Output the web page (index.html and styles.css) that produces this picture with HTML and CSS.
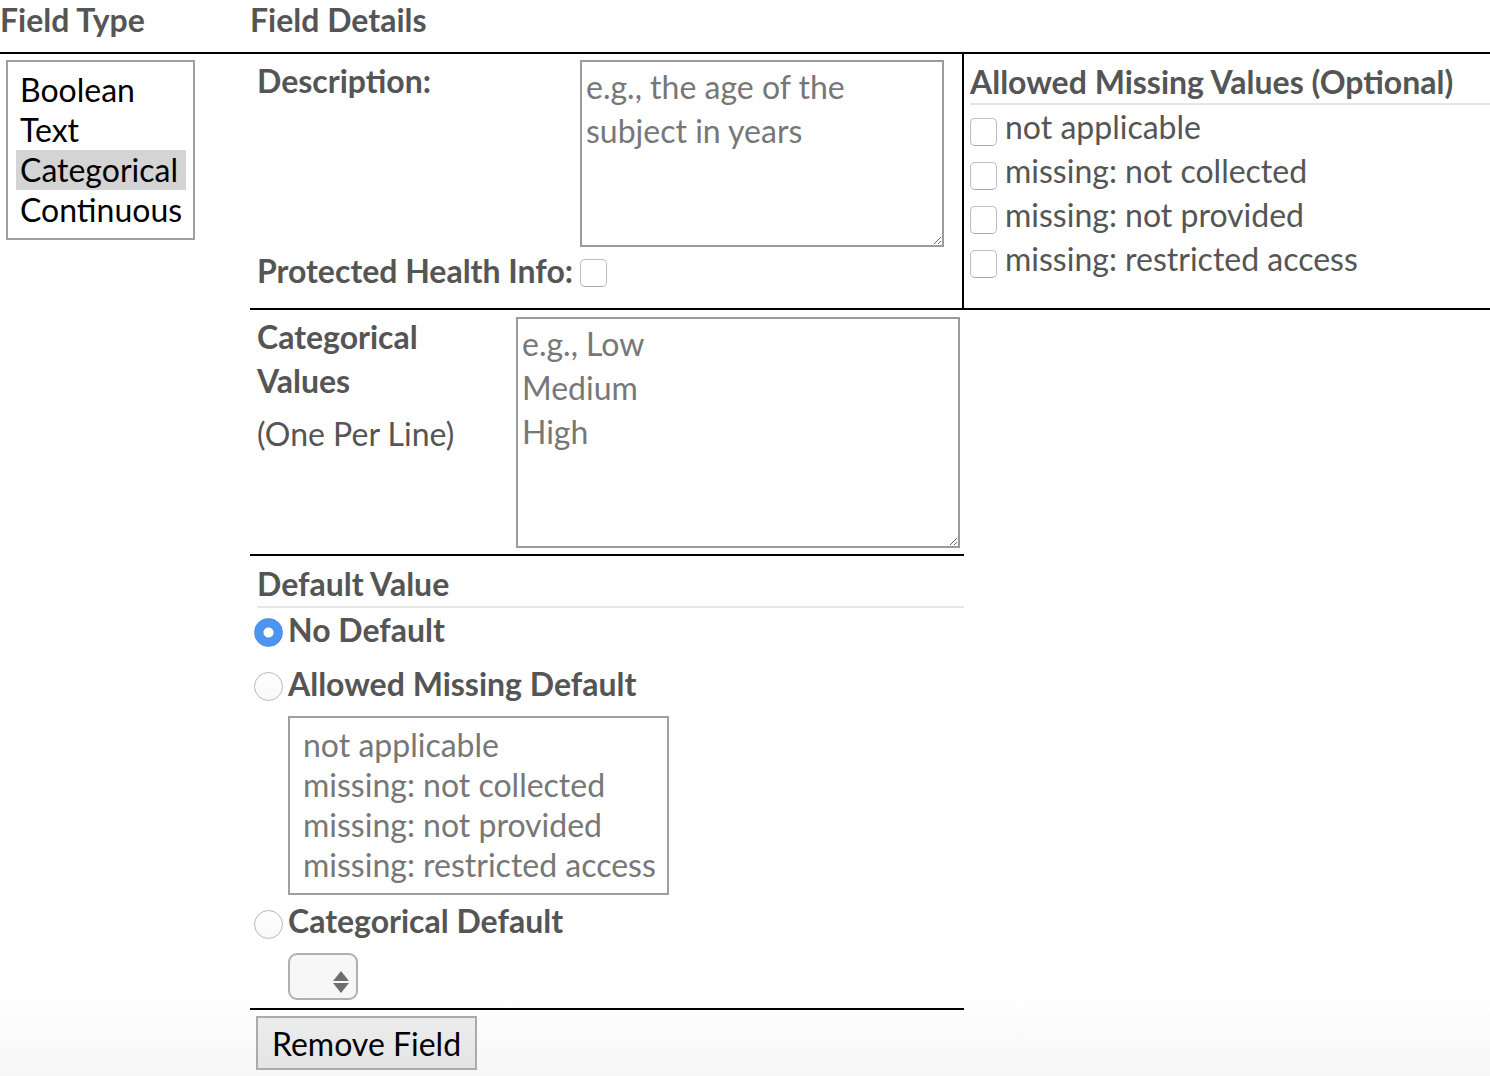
FILE: index.html
```html
<!DOCTYPE html>
<html lang="en">
<head>
<meta charset="utf-8">
<title>Field Editor</title>
<link rel="stylesheet" href="styles.css">
</head>
<body>
<div class="page">
  <div class="head-row">
    <div class="head-type">Field Type</div>
    <div class="head-details">Field Details</div>
  </div>
  <div class="main-row">
    <div class="type-col">
      <div class="listbox type-list" role="listbox">
        <div class="opt">Boolean</div>
        <div class="opt">Text</div>
        <div class="opt selected">Categorical</div>
        <div class="opt">Continuous</div>
      </div>
    </div>
    <div class="details-col">
      <div class="top-section">
        <div class="basic">
          <div class="form-row">
            <label class="lbl desc-lbl">Description:</label>
            <textarea class="ta desc" placeholder="e.g., the age of the subject in years"></textarea>
          </div>
          <div class="form-row phi-row">
            <label class="lbl">Protected Health Info:</label>
            <input type="checkbox" class="cb phi-cb">
          </div>
        </div>
        <div class="missing">
          <h4 class="sub-head">Allowed Missing Values (Optional)</h4>
          <label class="cb-row"><input type="checkbox" class="cb">not applicable</label>
          <label class="cb-row"><input type="checkbox" class="cb">missing: not collected</label>
          <label class="cb-row"><input type="checkbox" class="cb">missing: not provided</label>
          <label class="cb-row"><input type="checkbox" class="cb">missing: restricted access</label>
        </div>
      </div>
      <div class="cat-section">
        <div class="cat-label">
          <div class="cat-title">Categorical<br>Values</div>
          <div class="hint">(One Per Line)</div>
        </div>
        <textarea class="ta cats" placeholder="e.g., Low&#10;Medium&#10;High"></textarea>
      </div>
      <div class="default-section">
        <h4 class="sub-head">Default Value</h4>
        <label class="radio-row"><input type="radio" name="def" class="rd" checked>No Default</label>
        <label class="radio-row second"><input type="radio" name="def" class="rd">Allowed Missing Default</label>
        <div class="listbox missing-list" role="listbox">
          <div class="opt">not applicable</div>
          <div class="opt">missing: not collected</div>
          <div class="opt">missing: not provided</div>
          <div class="opt">missing: restricted access</div>
        </div>
        <label class="radio-row third"><input type="radio" name="def" class="rd">Categorical Default</label>
        <div class="select-wrap">
          <select class="sel"></select>
          <svg class="sel-arrows" width="16" height="22" viewBox="0 0 16 22"><polygon points="8,0 16,10 0,10" fill="#6e6e6e"/><polygon points="0,12 16,12 8,22" fill="#6e6e6e"/></svg>
        </div>
      </div>
      <button class="remove" type="button">Remove Field</button>
    </div>
  </div>
</div>
</body>
</html>
```

FILE: styles.css
```css
* { box-sizing: border-box; }
html, body { margin: 0; padding: 0; }
body {
  font-family: Lato, "Liberation Sans", sans-serif;
  font-size: 32px;
  color: #555;
  min-height: 1076px;
  background: linear-gradient(to bottom, #fff 0, #fff 990px, #f7f7f7 1076px);
}

.head-row {
  display: flex;
  height: 54px;
  border-bottom: 2px solid #000;
}
.head-type, .head-details {
  font-size: 32px;
  font-weight: 700;
  line-height: 38px;
  padding-top: 1px;
}
.head-type { width: 250px; }

.main-row { display: flex; align-items: flex-start; }
.type-col { width: 250px; padding: 6px 0 0 6px; flex: none; }

.listbox {
  border: 2px solid #a0a0a0;
  background: #fff;
  line-height: 40px;
}
.type-list {
  width: 189px;
  padding: 8px 7px 8px 8px;
  color: #000;
}
.opt { padding: 0 4px; white-space: nowrap; }
.opt.selected { background: #d4d4d4; }

.details-col { flex: 1; }

.top-section {
  display: flex;
  border-bottom: 2px solid #000;
}
.basic {
  width: 714px;
  flex: none;
  border-right: 2px solid #000;
  padding: 6px 0 19px 7px;
}
.form-row { display: flex; align-items: flex-start; }
.lbl {
  width: 323px;
  flex: none;
  font-weight: 700;
  line-height: 36px;
  white-space: nowrap;
}
.desc-lbl { padding-top: 3px; }
.phi-row { margin-top: 6px; }
.phi-cb { margin-top: 6px !important; }

.ta {
  font-family: inherit;
  font-size: 32px;
  line-height: 44px;
  color: #555;
  border: 2px solid #9b9b9b;
  border-radius: 0;
  padding: 3px 4px;
  margin: 0;
  background: #fff;
  flex: none;
}
.ta::placeholder { color: #777; opacity: 1; }
.desc { width: 364px; height: 187px; padding-right: 20px; }

.missing { flex: 1; padding-left: 6px; }
.sub-head {
  margin: 10px 0 0;
  font-size: 32px;
  font-weight: 700;
  line-height: 36px;
  padding-bottom: 3px;
  border-bottom: 2px solid #e6e6e6;
}
.cb-row {
  display: flex;
  align-items: flex-start;
  gap: 8px;
  line-height: 44px;
}
.cb {
  -webkit-appearance: none;
  appearance: none;
  width: 27px;
  height: 28px;
  margin: 13px 0 0;
  flex: none;
  border: 1px solid #bdbdbd;
  border-bottom-color: #a8a8a8;
  border-radius: 5px;
  background: #fff;
}

.cat-section {
  display: flex;
  align-items: flex-start;
  width: 714px;
  border-bottom: 2px solid #000;
  padding: 0 0 6px 7px;
}
.cat-label { width: 259px; flex: none; padding-top: 5px; }
.cat-title { font-weight: 700; line-height: 44px; }
.hint { line-height: 36px; margin-top: 13px; }
.cats { width: 444px; height: 231px; margin-top: 7px; }

.default-section {
  width: 714px;
  border-bottom: 2px solid #000;
  padding: 0 0 8px 7px;
}
.default-section .sub-head { padding-bottom: 4px; }
.radio-row {
  display: flex;
  align-items: flex-start;
  gap: 5px;
  margin-left: -3px;
  font-weight: 700;
  line-height: 44px;
}
.radio-row.second { margin-top: 10px; }
.radio-row.third { margin-top: 4px; }
.rd {
  -webkit-appearance: none;
  appearance: none;
  width: 29px;
  height: 29px;
  margin: 10px 0 0;
  flex: none;
  border-radius: 50%;
  border: 1px solid #b8b8b8;
  background: linear-gradient(#fff, #f8f8f8);
}
.radio-row.third .rd { margin-top: 11px; }
.rd:checked {
  border-color: #4a8fec;
  background: radial-gradient(circle, #fff 0, #fff 4.5px, #4d93f0 5.5px);
}

.missing-list {
  width: 381px;
  margin: 10px 0 0 31px;
  padding: 7px 8px 8px;
  color: #777;
}
.missing-list .opt { padding: 0 5px; }

.select-wrap {
  position: relative;
  width: 70px;
  height: 47px;
  margin: 10px 0 0 31px;
}
.sel {
  -webkit-appearance: none;
  appearance: none;
  display: block;
  width: 100%;
  height: 100%;
  margin: 0;
  border: 2px solid #b0b0b0;
  border-radius: 9px;
  background: #f7f7f7;
}
.sel-arrows {
  position: absolute;
  right: 9px;
  top: 18px;
  pointer-events: none;
}

.remove {
  display: block;
  margin: 6px 0 0 6px;
  width: 221px;
  height: 54px;
  padding: 0;
  font-family: inherit;
  font-size: 32px;
  color: #000;
  border: 2px solid #ababab;
  border-radius: 0;
  background: linear-gradient(#ededed, #e4e4e4);
}
```
